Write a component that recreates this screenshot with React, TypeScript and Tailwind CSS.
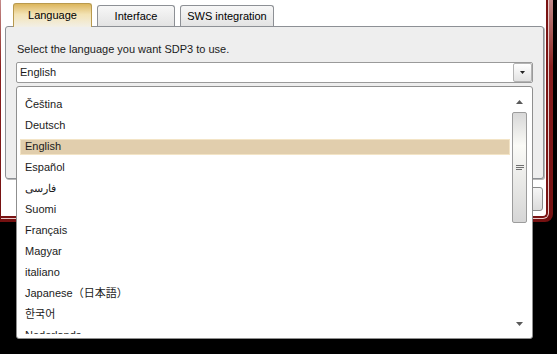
import React from "react";

const languages = [
  "Čeština",
  "Deutsch",
  "English",
  "Español",
  "فارسی",
  "Suomi",
  "Français",
  "Magyar",
  "italiano",
  "Japanese（日本語）",
  "한국어",
  "Nederlands",
];

const tabs = [
  { id: "language", label: "Language", width: "w-[79px]" },
  { id: "interface", label: "Interface", width: "w-[78px]" },
  { id: "sws", label: "SWS integration", width: "w-[94px]" },
];

const ArrowUp: React.FC = () => (
  <svg width="7" height="4" viewBox="0 0 7 4">
    <path d="M0 4 L3.5 0 L7 4 Z" fill="#5a5a5a" />
  </svg>
);

const ArrowDown: React.FC = () => (
  <svg width="7" height="4" viewBox="0 0 7 4">
    <path d="M0 0 L7 0 L3.5 4 Z" fill="#5a5a5a" />
  </svg>
);

const App: React.FC = () => {
  const activeTab = "language";
  const selected = "English";

  return (
    <div className="relative w-[557px] h-[354px] overflow-hidden bg-black font-['Liberation_Sans','Noto_Sans_CJK_JP',sans-serif] text-[11px] text-[#1b1b1b]">
      {/* Window frame */}
      <div className="w-[553px] h-[222px] pl-[1px] pr-[4px] pb-[3px] rounded-br-[8px] bg-linear-to-b from-[#c48a8a] via-[#8a2020] via-30% to-[#741010]">
        <div className="h-full pr-[1px] pb-[1px] rounded-br-[6px] bg-[#e9cccc]">
          <div className="h-full bg-white border-r-2 border-b-2 border-[#7a1414] rounded-br-[5px]">
            {/* Tabs */}
            <div className="flex items-end gap-[5px] pl-[12px] h-[26px]">
              {tabs.map((tab) =>
                tab.id === activeTab ? (
                  <div
                    key={tab.id}
                    className={`${tab.width} relative z-10 -mb-[1px] h-[24px] flex items-center justify-center rounded-t-[3px] border border-b-0 border-[#b99a4e] bg-linear-to-b from-[#dcb65c] via-[#f3e3b4] via-45% to-[#f2efe6] text-black`}
                  >
                    {tab.label}
                  </div>
                ) : (
                  <div
                    key={tab.id}
                    className={`${tab.width} h-[21px] flex items-center justify-center rounded-t-[3px] border border-b-0 border-[#8d9095] bg-linear-to-b from-[#f7f7f7] to-[#e3e3e3] text-black`}
                  >
                    {tab.label}
                  </div>
                )
              )}
            </div>

            {/* Tab panel */}
            <div className="ml-[4px] w-[539px] h-[153px] border border-[#8d9095] rounded-[3px] bg-[#eeeeee] px-[10px] pt-[15px] shadow-[1px_1px_0_#b8b8b8]">
              <p className="pl-[1px] mb-[6px] leading-[14px]">Select the language you want SDP3 to use.</p>
              <div className="h-[21px] flex items-center border border-[#9a9a9a] rounded-[2px] bg-white">
                <span className="flex-1 pl-[3px]">{selected}</span>
                <div className="w-[19px] h-[19px] flex items-center justify-center border border-[#b4b4b4] rounded-[2px] bg-linear-to-b from-white to-[#e2e2e2]">
                  <svg width="5" height="3" viewBox="0 0 5 3">
                    <path d="M0 0 L5 0 L2.5 3 Z" fill="#222" />
                  </svg>
                </div>
              </div>
            </div>

            {/* Bottom buttons */}
            <div className="flex justify-end pr-[3px] mt-[8px]">
              <button className="w-[75px] h-[24px] border border-[#8a8a8a] rounded-[3px] bg-linear-to-b from-[#f6f6f6] to-[#dcdcdc] text-[11px]">
                Close
              </button>
            </div>
          </div>
        </div>
      </div>

      {/* Open dropdown list */}
      <div className="absolute left-[16px] top-[86px] w-[517px] h-[253px] flex border border-[#8f8f8f] rounded-[3px] bg-white">
        <div className="flex-1 pt-[7px] pl-[3px]">
          <div className="h-[240px] overflow-hidden">
            {languages.map((lang) => (
              <div key={lang} className="h-[21px] flex items-center">
                <div
                  className={`w-[490px] h-[16px] flex items-center pl-[4px] border ${
                    lang === selected ? "border-[#f3e4c6] bg-[#e1cead]" : "border-transparent"
                  }`}
                >
                  {lang}
                </div>
              </div>
            ))}
          </div>
        </div>

        {/* Scrollbar */}
        <div className="w-[17px] mr-[4px] flex flex-col items-center">
          <div className="mt-[13px]">
            <ArrowUp />
          </div>
          <div className="mt-[8px] w-[15px] h-[111px] flex items-center justify-center border border-[#9c9c9c] rounded-[2px] bg-linear-to-b from-[#d8d8d8] via-[#fbfbf7] via-30% to-[#d6d6d6]">
            <svg width="8" height="5" viewBox="0 0 8 5">
              <rect x="0" y="0" width="8" height="1" fill="#707070" />
              <rect x="0" y="2" width="8" height="1" fill="#707070" />
              <rect x="0" y="4" width="6" height="1" fill="#707070" />
            </svg>
          </div>
          <div className="mt-auto mb-[12px]">
            <ArrowDown />
          </div>
        </div>
      </div>
    </div>
  );
};

export default App;
